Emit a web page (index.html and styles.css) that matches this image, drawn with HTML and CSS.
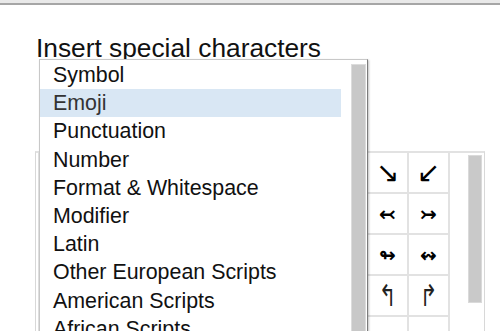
FILE: index.html
```html
<!doctype html>
<html lang="en">
<head>
	<meta charset="UTF-8">
	<meta name="viewport" content="width=device-width">
	<title>Insert special characters</title>
<link rel="stylesheet" href="styles.css">
</head>
<body>

<div class="chrome"></div>

<div class="dialog">
	<h1 class="title">Insert special characters</h1>

	<div class="picker">
		<div class="grid">
			<span></span><span></span><span></span><span></span><span></span><span></span><span></span><span></span><span class="big">&#8600;</span><span class="big">&#8601;</span>
			<span></span><span></span><span></span><span></span><span></span><span></span><span></span><span></span><span class="small">&#8610;</span><span class="small">&#8611;</span>
			<span></span><span></span><span></span><span></span><span></span><span></span><span></span><span></span><span class="small">&#8620;</span><span class="small">&#8621;</span>
			<span></span><span></span><span></span><span></span><span></span><span></span><span></span><span></span><span class="tall"><i>&#8624;</i></span><span class="tall"><i>&#8625;</i></span>
			<span></span><span></span><span></span><span></span><span></span><span></span><span></span><span></span><span></span><span></span>
		</div>
		<div class="picker-scroll"><div class="thumb"></div></div>
	</div>

	<div class="menu">
		<ul class="menu-list">
			<li>Symbol</li>
			<li class="active">Emoji</li>
			<li>Punctuation</li>
			<li>Number</li>
			<li>Format &amp; Whitespace</li>
			<li>Modifier</li>
			<li>Latin</li>
			<li>Other European Scripts</li>
			<li>American Scripts</li>
			<li>African Scripts</li>
			<li>Middle Eastern Scripts</li>
		</ul>
		<div class="menu-scroll"><div class="thumb"></div></div>
	</div>
</div>

</body>
</html>
```

FILE: styles.css
```css
html, body {
	margin: 0;
	height: 100%;
	overflow: hidden;
	background: #fff;
	font-family: "Liberation Sans", Arial, sans-serif;
	color: #111;
}
.chrome {
	height: 3px;
	background: #e9e9e9;
	border-bottom: 2px solid #a6a6a6;
}
.dialog {
	position: relative;
	padding: 28px 0 0 35px;
}
.title {
	margin: 0 0 0 1px;
	font-size: 26.3px;
	font-weight: normal;
	line-height: 30px;
}

/* character grid behind the open menu */
.picker {
	display: flex;
	width: 446px;
	margin-top: 88px;
	padding-left: 2px;
	border: 1px solid #d8d8d8;
	border-top: 2px solid #e2e2e2;
}
.grid {
	display: grid;
	grid-template-columns: repeat(10, 39px);
	grid-auto-rows: 39px;
	gap: 2px;
	padding: 0 2px 2px 2px;
	background: #e2e2e2;
}
.grid span {
	display: flex;
	align-items: center;
	justify-content: center;
	background: #fff;
	font-family: "DejaVu Sans", sans-serif;
	font-size: 17px;
	color: #000;
}
.grid .big {
	font-size: 28px;
}
.grid .small {
	font-size: 20px;
	font-weight: bold;
}
.grid .tall {
	font-size: 30px;
	color: #222;
}
.grid .tall i {
	font-style: normal;
	display: inline-block;
	transform: scaleX(.7);
}
.picker-scroll {
	flex: 1;
	padding: 2px 0 0 18px;
}
.picker-scroll .thumb {
	width: 12px;
	height: 146px;
	background: #c9c9c9;
	border: 1px solid #dadada;
}

/* open category menu */
.menu {
	position: absolute;
	left: 39px;
	top: 54px;
	width: 327px;
	height: 300px;
	display: flex;
	background: #fff;
	border: 1px solid #c8c8c8;
	border-right-color: #7c7c7c;
	box-shadow: 1px 1px 2px rgba(0, 0, 0, .25);
}
.menu-list {
	width: 301px;
	margin: 0;
	padding: 1px 0 0 0;
	list-style: none;
}
.menu-list li {
	padding-left: 13px;
	font-size: 21.4px;
	line-height: 28.2px;
	height: 28.2px;
	white-space: nowrap;
}
.menu-list li.active {
	background: #d9e7f4;
	color: #333;
}
.menu-scroll {
	padding: 4px 0 0 10px;
}
.menu-scroll .thumb {
	width: 13px;
	height: 400px;
	background: #c8c8c8;
	border: 1px solid #dcdcdc;
}
```
